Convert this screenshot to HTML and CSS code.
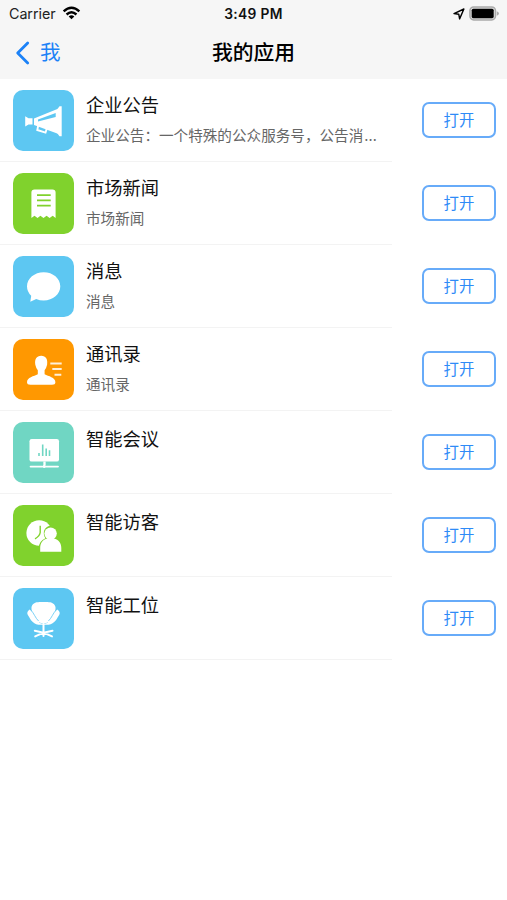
FILE: index.html
```html
<!DOCTYPE html>
<html lang="zh-CN">
<head>
<meta charset="utf-8">
<title>我的应用</title>
<link rel="stylesheet" href="styles.css">
</head>
<body>
<header class="header">
  <div class="status">
    <div class="status-left"><span class="carrier">Carrier</span>
      <svg class="wifi" width="19" height="14" viewBox="0 0 20 15"><g fill="none" stroke="#000" stroke-width="2.6"><path d="M1.6 5.7Q10-1.8 18.4 5.7"/><path d="M4.7 9.1Q10 4.4 15.3 9.1"/></g><path d="M7 11.2Q10 8.8 13 11.2L10 14.2Z"/></svg>
    </div>
    <div class="time">3:49 PM</div>
    <div class="status-right">
      <svg width="12" height="12" viewBox="0 0 12 12"><path d="M1 5.6 10.9 1 6.6 10.9 5.8 6.3Z" fill="none" stroke="#000" stroke-width="1.4" stroke-linejoin="round"/></svg>
      <svg class="battery" width="31" height="15" viewBox="0 0 31 15"><rect x=".9" y=".9" width="25.6" height="13" rx="3.8" fill="#ddd" stroke="#aaa" stroke-width="1.5"/><rect x="2.7" y="2.7" width="22" height="9.5" rx="1.6"/><path d="M27.8 5.2Q30 6 30 7.5T27.8 9.8Z" fill="#aaa"/></svg>
    </div>
  </div>
  <nav class="nav">
    <a class="back"><svg width="15" height="24" viewBox="0 0 15 24"><path d="M12.7 2 2.7 12l10 10" fill="none" stroke="#1c82f7" stroke-width="2.8" stroke-linecap="round" stroke-linejoin="round"/></svg><span>我</span></a>
    <h1>我的应用</h1>
  </nav>
</header>
<main>
  <section class="row">
    <svg class="icon blue" viewBox="0 0 61 61"><path fill="#fff" d="M12.2 26.3 15.5 28.3H19.5V34.5H15.5L12.2 36.4Z"/><path d="M21 28.4 45.6 18.5V44L21 35Z" fill="#fff"/><path d="M25 29.4 42.7 23V27L25 31.5Z" fill="#5dc7f2"/><path d="M46.5 16.2H48.7V46.2H46.5L44.5 43.5V19Z" fill="#fff"/><path d="M25.2 35.5 24.3 40 32.5 42.6 34 38" fill="none" stroke="#fff" stroke-width="1.9"/></svg>
    <div class="info"><h2>企业公告</h2><p>企业公告：一个特殊的公众服务号，公告消<span class="dots">…</span></p></div>
    <button>打开</button>
  </section>
  <section class="row">
    <svg class="icon green" viewBox="0 0 61 61"><path fill="#fff" d="M21.5 16.5H39.5Q42.6 16.5 42.6 19.5V45L39.7 42.7 36.6 45 33.6 42.7 30.5 45 27.4 42.7 24.5 45 21.5 42.7 18.4 45V19.5Q18.4 16.5 21.5 16.5Z"/><path d="M24 22.2H37.7M24 27.4H37.7M24 32.6H37.7" stroke="#80d22d" stroke-width="1.7"/></svg>
    <div class="info"><h2>市场新闻</h2><p>市场新闻</p></div>
    <button>打开</button>
  </section>
  <section class="row">
    <svg class="icon blue" viewBox="0 0 61 61"><path fill="#fff" d="M30.7 16.2C40 16.2 47.3 22.4 47.3 30.3S40 44.5 30.7 44.5Q26.7 44.5 23.2 43L17.3 45.8 18.2 39.8Q14 35.8 14 30.3C14 22.4 21.5 16.2 30.7 16.2Z"/></svg>
    <div class="info"><h2>消息</h2><p>消息</p></div>
    <button>打开</button>
  </section>
  <section class="row">
    <svg class="icon orange" viewBox="0 0 61 61"><path fill="#fff" d="M28.2 16.7C33 16.7 35 20.2 34.1 25.8Q33.3 29.4 31.6 31.2V35.3C35.5 37.3 42.4 38.4 42.4 43.2Q42.4 45.7 39 45.7H17.4Q14 45.7 14 43.2C14 38.4 20.9 37.3 24.8 35.3V31.2Q23.1 29.4 22.3 25.8C21.4 20.2 23.4 16.7 28.2 16.7Z"/><path d="M37.3 24.4H48.7M39.3 30H48.7M41.5 35.7H48.3" stroke="#fff" stroke-opacity=".85" stroke-width="2"/></svg>
    <div class="info"><h2>通讯录</h2><p>通讯录</p></div>
    <button>打开</button>
  </section>
  <section class="row single">
    <svg class="icon teal" viewBox="0 0 61 61"><rect x="16.5" y="17" width="29.5" height="22.6" rx="2.2" fill="#fff"/><path d="M31.5 39.5V43" stroke="#fff" stroke-width="2.3"/><path d="M17.6 44.6H29.3M33.3 44.6H45" stroke="#fff" stroke-width="1.9" stroke-linecap="round"/><circle cx="31.3" cy="44.4" r="1.7" fill="#fff"/><path d="M26 31V34M29.7 22.5V34M33.2 26.5V34M36.5 28.2V34" stroke="#70d6c3" stroke-width="1.6"/></svg>
    <div class="info"><h2>智能会议</h2></div>
    <button>打开</button>
  </section>
  <section class="row single">
    <svg class="icon green" viewBox="0 0 61 61"><circle cx="26.2" cy="28" r="12.8" fill="#fff"/><path d="M27.2 20.7V27.5Q26.7 31.2 22 33.8" fill="none" stroke="#80d22d" stroke-width="1.4"/><path d="M30.8 28.7A7.4 7.4 0 1 1 43.4 33.2Q49.5 35.2 49.5 43V48.3H25.8V43Q25.8 36 32.4 33.2A7.4 7.4 0 0 1 30.8 28.7Z" fill="#80d22d"/><circle cx="37.6" cy="28.6" r="6.2" fill="#fff"/><path fill="#fff" d="M34.5 32H40.7V33.4C46 34.6 48.3 38 48.3 43V46.7H27.2V43C27.2 38 29.3 34.6 34.5 33.4Z"/></svg>
    <div class="info"><h2>智能访客</h2></div>
    <button>打开</button>
  </section>
  <section class="row single">
    <svg class="icon blue" viewBox="0 0 61 61"><path fill="#fff" d="M18.5 19C20 13.4 25.5 13.9 30.5 13.9S41 13.4 42.5 19C43 24 39.5 30 35.8 34Q30.5 36.4 25.2 34C21.5 30 18 24 18.5 19Z"/><path fill="#fff" d="M16.6 21.6C20.5 24 22.5 29 26 34.2 27.5 35.8 29.4 35.5 30.5 35.5S33.5 35.8 35 34.2C38.5 29 40.5 24 44.4 21.6Q47.6 24 46.4 26.6C44 30.3 42 36 35.5 36.8H25.5C19 36 17 30.3 14.6 26.6Q13.4 24 16.6 21.6Z"/><path d="M17.7 21.8C21.2 25.5 22.3 30 25.6 33M43.3 21.8C39.8 25.5 38.7 30 35.4 33" fill="none" stroke="#5dc7f2" stroke-width=".8"/><path d="M30.5 36V48M21.8 42.8 30.5 44.7 39.5 42.8M22.2 48.4 30.5 44.7 39 48.4" stroke="#fff" stroke-width="2" fill="none" stroke-linecap="round"/></svg>
    <div class="info"><h2>智能工位</h2></div>
    <button>打开</button>
  </section>
</main>
</body>
</html>
```
FILE: styles.css
```css
* { box-sizing: border-box; }
body { margin: 0; background: #fff; color: #111; font-family: Inter, "Noto Sans CJK SC", sans-serif; }
h1, h2, p { margin: 0; }
svg { display: block; flex: none; }
.header { height: 79px; background: #f6f6f6; }
.status { height: 27px; display: grid; grid-template-columns: 1fr auto 1fr; align-items: center; padding: 0 7px 0 9px; }
.status-left, .status-right { display: flex; align-items: center; }
.status-left { gap: 6px; }
.carrier { font-size: 14.3px; line-height: 18px; color: #222; letter-spacing: -.05px; }
.wifi { margin-top: -2px; }
.time { font-size: 13.8px; font-weight: 600; line-height: 18px; margin-left: -2px; letter-spacing: .3px; }
.status-right { justify-content: flex-end; gap: 4px; }
.nav { height: 51px; display: grid; grid-template-columns: 1fr auto 1fr; align-items: center; padding: 1px 15px 0; }
.back { display: flex; align-items: center; gap: 10px; color: #1c82f7; font-size: 20.5px; line-height: 28px; }
.nav h1 { font-size: 20.8px; font-weight: 500; line-height: 28px; color: #000; }
.row { height: 83px; display: flex; align-items: flex-start; gap: 12px; padding: 11px 11px 0 13px; background: linear-gradient(#f3f3f3, #f3f3f3) left bottom / 392px 1px no-repeat; }
.icon { width: 61px; height: 61px; border-radius: 10px; }
.blue { background: #5dc7f2; }
.green { background: #80d22d; }
.orange { background: #ff9801; }
.teal { background: #70d6c3; }
.info { flex: 1; min-width: 0; padding-top: 1px; }
.single .info { padding-top: 3px; }
.info h2 { font-size: 18.3px; font-weight: 400; line-height: 28px; }
.info p { font-size: 14.6px; line-height: 22px; margin-top: 6px; color: #666; white-space: nowrap; }
.dots { margin-left: 1px; letter-spacing: 1px; }
button { flex: none; width: 74px; height: 36px; margin-top: 12px; padding: 0; border: 2px solid #67abf9; border-radius: 7px; background: #fff; color: #2e8bf7; font: 15.4px/20px Inter, "Noto Sans CJK SC", sans-serif; }
.row button { padding-top: 1px; }
```
